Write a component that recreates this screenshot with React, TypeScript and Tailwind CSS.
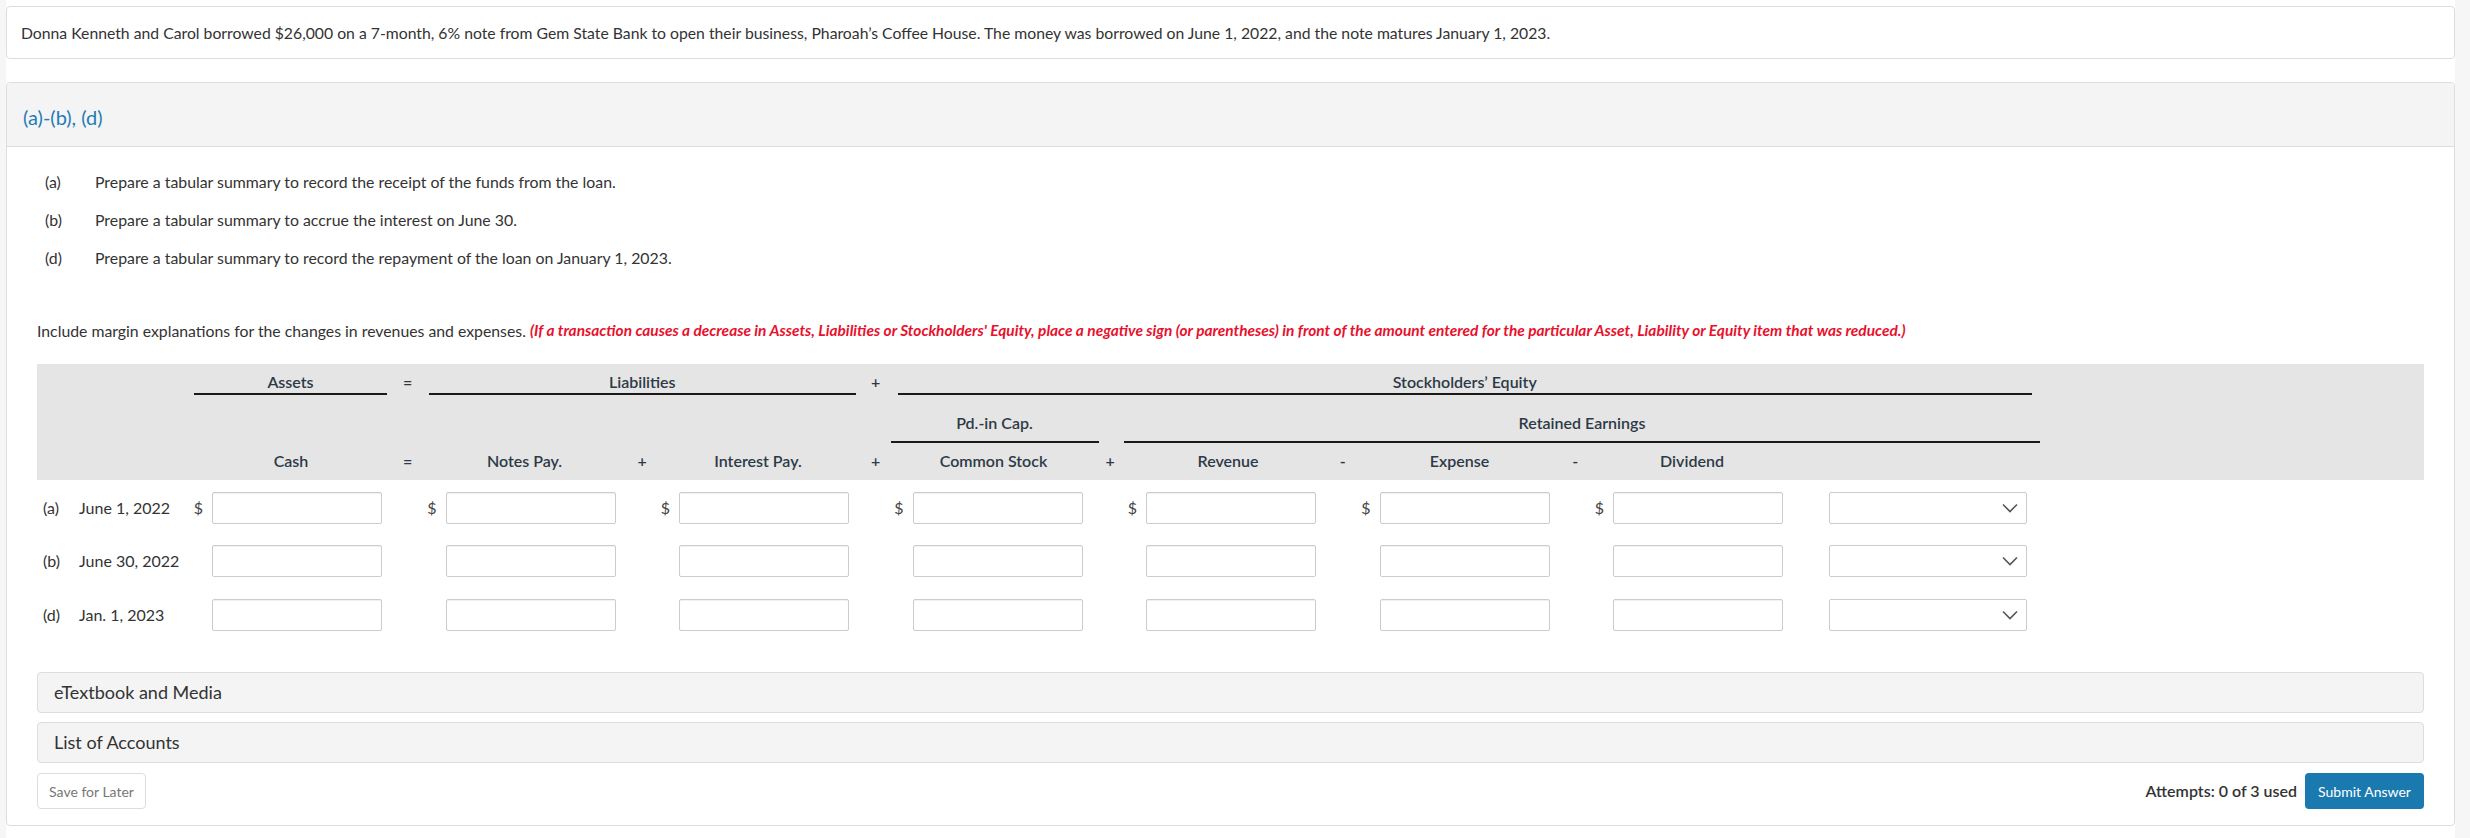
import React from "react";

function Chevron() {
  return (
    <svg width="16" height="10" viewBox="0 0 16 10" fill="none">
      <path d="M1 1.5 L8 8.5 L15 1.5" stroke="#555" strokeWidth="1.6" />
    </svg>
  );
}

function Input() {
  return (
    <div className="w-[170px] h-[32px] bg-white border border-[#cccccc] rounded-[2px] shadow-[inset_0_1px_1px_rgba(0,0,0,0.06)]" />
  );
}

function Select() {
  return (
    <div className="w-[198px] h-[32px] bg-white border border-[#cccccc] rounded-[2px] flex items-center justify-end pr-[8px]">
      <Chevron />
    </div>
  );
}

const GRID =
  "grid grid-cols-[153px_194px_39.5px_194px_39.5px_194px_39.5px_194px_39.5px_194px_39.5px_194px_39.5px_194px_255px]";

function DataRow({ tag, date, dollars }: { tag: string; date: string; dollars: boolean }) {
  const cols = [2, 4, 6, 8, 10, 12, 14];
  const colClass: Record<number, string> = {
    2: "col-start-2",
    4: "col-start-4",
    6: "col-start-6",
    8: "col-start-8",
    10: "col-start-10",
    12: "col-start-12",
    14: "col-start-14",
  };
  return (
    <div className={`${GRID} h-[32px] items-center`}>
      <div className="col-start-1 flex items-center pl-[6px] text-[16px] text-[#333]">
        <span className="w-[36px]">{tag}</span>
        <span>{date}</span>
      </div>
      {cols.map((c) => (
        <div key={c} className={`${colClass[c]} flex items-center justify-end pr-[2px] gap-[9px]`}>
          {dollars && <span className="text-[16px] text-[#444]">$</span>}
          <Input />
        </div>
      ))}
      <div className="col-start-15 flex justify-end pr-[13px]">
        <Select />
      </div>
    </div>
  );
}

export default function App() {
  const hdr = "text-[16px] font-semibold text-[#2d3a45] leading-[20px]";
  return (
    <div className="min-h-[838px] w-[2470px] bg-[#f6f6f6] font-['Lato',sans-serif] text-[#333]">
      <div className="ml-[6px] w-[2449px] min-h-[838px] bg-white pt-[6px]">
        {/* Top problem card */}
        <div className="h-[53px] border border-[#dddddd] rounded-[4px] flex items-center pl-[14px] text-[15.75px] text-[#333]">
          Donna Kenneth and Carol borrowed $26,000 on a 7-month, 6% note from Gem State Bank to open their business, Pharoah’s Coffee House. The money was borrowed on June 1, 2022, and the note matures January 1, 2023.
        </div>

        {/* Main card */}
        <div className="mt-[23px] border border-[#dddddd] rounded-[4px] bg-white">
          <div className="h-[64px] bg-[#f4f4f4] border-b border-[#dddddd] rounded-t-[4px] flex items-center pl-[16px] pt-[4px]">
            <span className="text-[20px] text-[#1f7db4]">(a)-(b), (d)</span>
          </div>

          <div className="px-[30px] pb-[16px]">
            <div className="mt-[25px] ml-[8px] flex flex-col gap-[18px] text-[15.85px] text-[#333]">
              <div className="flex h-[20px] items-center">
                <span className="w-[50px]">(a)</span>
                <span>Prepare a tabular summary to record the receipt of the funds from the loan.</span>
              </div>
              <div className="flex h-[20px] items-center">
                <span className="w-[50px]">(b)</span>
                <span>Prepare a tabular summary to accrue the interest on June 30.</span>
              </div>
              <div className="flex h-[20px] items-center">
                <span className="w-[50px]">(d)</span>
                <span>Prepare a tabular summary to record the repayment of the loan on January 1, 2023.</span>
              </div>
            </div>

            <div className="mt-[53px] h-[20px] flex items-center text-[15.8px] text-[#333] whitespace-nowrap">
              <span>Include margin explanations for the changes in revenues and expenses.&nbsp;</span>
              <span className="text-[15.45px] font-bold italic text-[#e8112d]">
                (If a transaction causes a decrease in Assets, Liabilities or Stockholders' Equity, place a negative sign (or parentheses) in front of the amount entered for the particular Asset, Liability or Equity item that was reduced.)
              </span>
            </div>

            {/* Table header */}
            <div className={`${GRID} grid-rows-[31px_47px_38px] mt-[23px] bg-[#e5e5e5]`}>
              {/* Row 1 */}
              <div className="col-start-2 row-start-1 flex flex-col justify-end ml-[4px] mr-[-3px]">
                <div className={`${hdr} text-center pb-[1px] border-b-2 border-[#1a1a1a]`}>Assets</div>
              </div>
              <div className={`col-start-3 row-start-1 flex items-end justify-center pl-[8px] pb-[3px] ${hdr} font-normal`}>=</div>
              <div className="col-start-4 col-span-3 row-start-1 flex flex-col justify-end ml-[5px] mr-[-5px]">
                <div className={`${hdr} text-center pb-[1px] border-b-2 border-[#1a1a1a]`}>Liabilities</div>
              </div>
              <div className={`col-start-7 row-start-1 flex items-end justify-center pl-[10px] pb-[3px] ${hdr} font-normal`}>+</div>
              <div className="col-start-8 col-span-8 row-start-1 flex flex-col justify-end ml-[7px] mr-[8px]">
                <div className={`${hdr} text-center pb-[1px] border-b-2 border-[#1a1a1a]`}>Stockholders’ Equity</div>
              </div>

              {/* Row 2 */}
              <div className="col-start-8 row-start-2 flex flex-col justify-end mr-[-14px] mb-[-1px]">
                <div className={`${hdr} text-center pb-[8px] border-b-2 border-[#1a1a1a]`}>Pd.-in Cap.</div>
              </div>
              <div className="col-start-10 col-span-6 row-start-2 flex flex-col justify-end mb-[-1px]">
                <div className={`${hdr} text-center pb-[8px] border-b-2 border-[#1a1a1a]`}>Retained Earnings</div>
              </div>

              {/* Row 3 */}
              <div className={`col-start-2 row-start-3 flex items-center justify-center pl-[8px] ${hdr}`}>Cash</div>
              <div className={`col-start-3 row-start-3 flex items-center justify-center pl-[8px] ${hdr} font-normal`}>=</div>
              <div className={`col-start-4 row-start-3 flex items-center justify-center pl-[8px] ${hdr}`}>Notes Pay.</div>
              <div className={`col-start-5 row-start-3 flex items-center justify-center pl-[10px] ${hdr} font-normal`}>+</div>
              <div className={`col-start-6 row-start-3 flex items-center justify-center pl-[8px] ${hdr}`}>Interest Pay.</div>
              <div className={`col-start-7 row-start-3 flex items-center justify-center pl-[10px] ${hdr} font-normal`}>+</div>
              <div className={`col-start-8 row-start-3 flex items-center justify-center pl-[12px] ${hdr}`}>Common Stock</div>
              <div className={`col-start-9 row-start-3 flex items-center justify-center pl-[12px] ${hdr} font-normal`}>+</div>
              <div className={`col-start-10 row-start-3 flex items-center justify-center pl-[14px] ${hdr}`}>Revenue</div>
              <div className={`col-start-11 row-start-3 flex items-center justify-center pl-[10px] ${hdr} font-normal`}>-</div>
              <div className={`col-start-12 row-start-3 flex items-center justify-center pl-[10px] ${hdr}`}>Expense</div>
              <div className={`col-start-13 row-start-3 flex items-center justify-center pl-[8px] ${hdr} font-normal`}>-</div>
              <div className={`col-start-14 row-start-3 flex items-center justify-center pl-[8px] ${hdr}`}>Dividend</div>
            </div>

            {/* Data rows */}
            <div className="mt-[12px]">
              <DataRow tag="(a)" date="June 1, 2022" dollars={true} />
            </div>
            <div className="mt-[21px]">
              <DataRow tag="(b)" date="June 30, 2022" dollars={false} />
            </div>
            <div className="mt-[22px]">
              <DataRow tag="(d)" date="Jan. 1, 2023" dollars={false} />
            </div>

            {/* Collapsible bars */}
            <div className="mt-[41px] h-[41px] bg-[#f4f4f4] border border-[#dddddd] rounded-[4px] flex items-center pl-[16px] text-[18px] text-[#333]">
              eTextbook and Media
            </div>
            <div className="mt-[9px] h-[41px] bg-[#f4f4f4] border border-[#dddddd] rounded-[4px] flex items-center pl-[16px] text-[18px] text-[#333]">
              List of Accounts
            </div>

            {/* Footer */}
            <div className="mt-[10px] flex items-center justify-between">
              <div className="w-[109px] h-[36px] border border-[#dddddd] rounded-[4px] bg-white flex items-center justify-center text-[14px] text-[#777]">
                Save for Later
              </div>
              <div className="flex items-center gap-[8px]">
                <span className="text-[16px] font-semibold text-[#333]">Attempts: 0 of 3 used</span>
                <div className="w-[119px] h-[36px] rounded-[4px] bg-[#1a7ab0] flex items-center justify-center text-[14px] text-white">
                  Submit Answer
                </div>
              </div>
            </div>
          </div>
        </div>
      </div>
    </div>
  );
}
